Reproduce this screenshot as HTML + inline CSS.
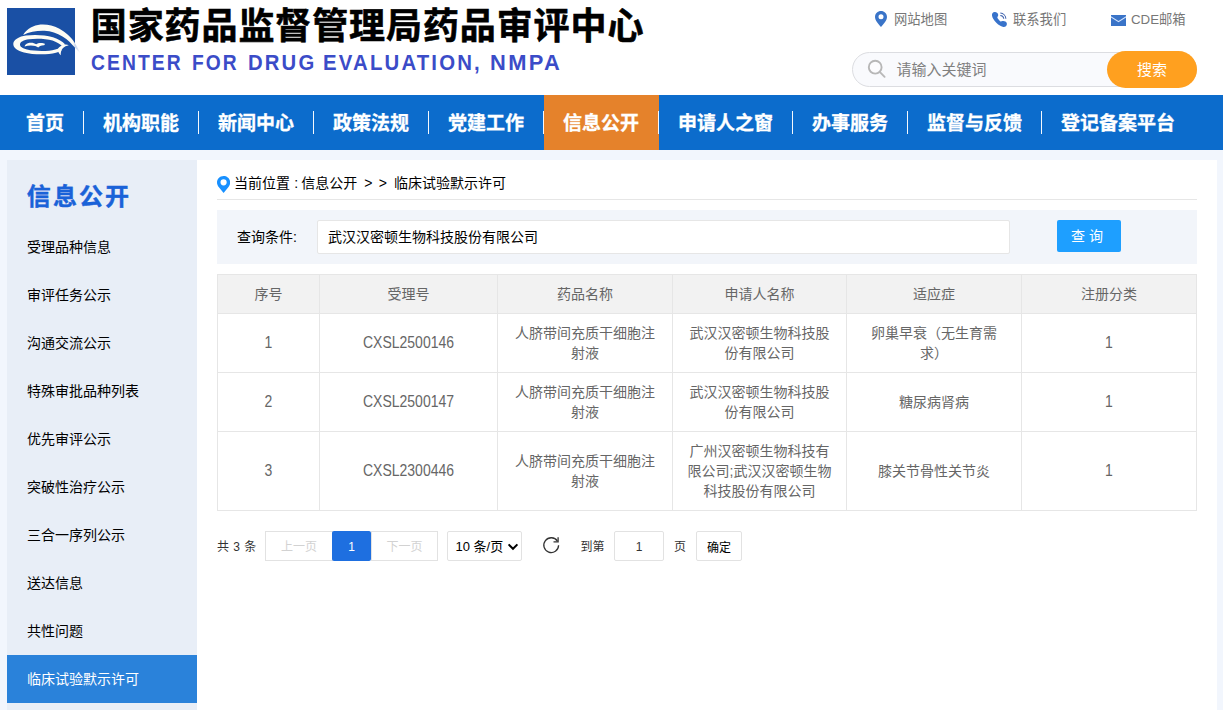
<!DOCTYPE html>
<html lang="zh-CN">
<head>
<meta charset="utf-8">
<title>国家药品监督管理局药品审评中心</title>
<style>
*{box-sizing:border-box;margin:0;padding:0}
html,body{width:1223px;height:710px;overflow:hidden}
body{background:#f2f6fd;font-family:"Liberation Sans","Noto Sans CJK SC",sans-serif;font-size:14px;color:#000;position:relative}
a{text-decoration:none;color:inherit}
ul{list-style:none}
.abs{position:absolute}
/* header */
#header{position:absolute;left:0;top:0;width:1223px;height:95px;background:#fff}
#logo{position:absolute;left:7px;top:8px;width:68px;height:67px;background:#1a50a5}
#title-cn{position:absolute;left:90.800px;top:2.200px;height:50px;line-height:50px;font-size:36px;font-weight:700;color:#000;white-space:nowrap;letter-spacing:0.900px;-webkit-text-stroke:0.600px #000}
#title-en{position:absolute;left:0;top:48.300px;height:30px;width:600px}
#title-en span{position:absolute;top:0;height:30px;line-height:30px;font-size:21.500px;font-weight:700;color:#3b4cc8;white-space:nowrap;letter-spacing:2.300px;transform-origin:0 50%}
.toplink{position:absolute;top:9.500px;height:20px;line-height:20px;font-size:13.300px;color:#777;white-space:nowrap}
.toplink svg{position:absolute;left:0;top:0}
#search{position:absolute;left:852px;top:52px;width:345px;height:35px;border:1px solid #dcdde1;border-radius:18px;background:#f9fafd}
#search .ph{position:absolute;left:43.500px;top:0;height:33px;line-height:33px;font-size:15px;color:#808080}
#search .btn{position:absolute;left:254px;top:-2px;width:90px;height:37px;border-radius:18.500px;background:#ffa01f;color:#fff;font-size:15px;line-height:37px;text-align:center}
/* nav */
#nav{position:absolute;left:0;top:95px;width:1223px;height:55px;background:#0c6ccc}
#nav ul{position:absolute;left:7px;top:0;height:55px;display:flex}
#nav li{position:relative;height:55px;line-height:57px;-webkit-text-stroke:0.300px #fff;padding:0 1px 0 0;text-align:center;width:115px;flex:none;font-size:19px;font-weight:700;color:#fff;white-space:nowrap}
#nav li:after{content:"";position:absolute;right:0;top:16px;width:1px;height:23px;background:#f4f8fd}
#nav li:last-child:after{display:none}
#nav li.on{background:#e5822b}
/* sidebar */
#side{position:absolute;left:7px;top:160px;width:190px;height:550px;background:#e8eef7}
#side h2{position:absolute;left:19.800px;top:18.400px;height:38px;line-height:38px;font-size:24px;font-weight:700;color:#1a62d8;white-space:nowrap;letter-spacing:2.100px;-webkit-text-stroke:0.400px #1a62d8}
#side li{position:absolute;left:0;width:190px;height:48px;line-height:48px;padding-left:20px;font-size:14px;color:#000;white-space:nowrap}
#side li.on{background:#2a82da;color:#fff}
/* main */
#main{position:absolute;left:197px;top:160px;width:1020px;height:550px;background:#fff}

#crumb{position:absolute;left:20px;top:13px;width:980px;height:27px;border-bottom:1px solid #e6e6e6;line-height:20px;font-size:14px;color:#000;white-space:nowrap}
#crumb span{position:absolute;top:0.400px}
#crumb span.c{width:20px;text-align:center}
#crumb svg{position:absolute;left:-0.100px;top:2.900px}
#query{position:absolute;left:20px;top:50px;width:980px;height:54px;background:#f2f5fa}
#query .lbl{position:absolute;left:20px;top:10px;height:34px;line-height:34px;font-size:14px;color:#000}
#query .inp{position:absolute;left:100px;top:10px;width:693px;height:34px;border:1px solid #e6e6e6;border-radius:2px;background:#fff;line-height:32px;padding-left:10px;font-size:14px;color:#000;white-space:nowrap}
#query .qbtn{position:absolute;left:840px;top:10px;width:64px;height:32px;background:#1e9fff;border-radius:2px;color:#fff;font-size:14px;line-height:32px;text-align:center;letter-spacing:4px;padding-left:0}
table{position:absolute;left:20px;top:114px;width:979px;border-collapse:collapse;table-layout:fixed;font-size:14px;color:#666}
th,td{border:1px solid #e6e6e6;text-align:center;vertical-align:middle;font-weight:400;line-height:20px;padding:0;white-space:nowrap}
th{height:39px;background:#f2f2f2}
td{height:59px}
tr.r3 td{height:79px}
.lt{display:inline-block;transform:translateY(-0.500px) scaleY(1.160)}
#pager{position:absolute;left:20px;top:371px;height:30px;width:700px;font-size:12px;color:#333;line-height:32px;white-space:nowrap}
#pager>*{position:absolute;top:0;height:30px}
#pager .sel{border-radius:2px}
#pager .bx{border:1px solid #e2e2e2;background:#fff;text-align:center;line-height:30px}
#pager .dis{color:#d2d2d2}
#pager .cur{background:#1e6fe0;color:#fff;text-align:center;border-radius:2px}
</style>
</head>
<body>
<div id="header">
  <div id="logo"><svg width="80" height="67" viewBox="0 0 80 67" style="position:absolute;left:0;top:0;overflow:visible">
<defs><linearGradient id="tl" x1="66" y1="0" x2="74" y2="0" gradientUnits="userSpaceOnUse"><stop offset="0" stop-color="#fdfcf4"/><stop offset="0.28" stop-color="#c9d6ec"/><stop offset="1" stop-color="#ffffff"/></linearGradient></defs>
<path d="M16.2 26.900C18.500 22.400 24 18.200 31 16.900C38 15.700 45.500 17.200 52 20.500C58.500 24 64.500 29.500 68.200 35.500C70.200 38.800 71.800 42 73.200 45C71.300 43.200 69.500 41.500 67.800 39.600C64.500 35.800 61 32 55.500 28.600C50 25.300 44 23.200 37.500 22.800C30 22.500 22.500 24 16.200 26.900Z" fill="url(#tl)"/>
<path fill-rule="evenodd" d="M6.300 35.600C6.800 31.500 12 28.500 19 27.500C27 26.400 38 26.800 46 29.200C51.500 30.900 55.500 33.500 58 36.200L55.500 38.500C52.500 36 49.500 34 45.500 32.600C39 30.600 29 30.200 22 31.200C16.500 32 13.200 33.800 13 36.300C12.800 38.600 15.500 40.500 20 41.600C26 43 35 43.400 42 42.700C46.500 42.200 50.500 41.200 53 39.800L54.500 42.500C51.500 44.400 47 45.600 42 46C34 46.700 24 46.300 17 44.500C10.500 42.800 5.900 39.800 6.300 35.600Z" fill="#fdfcf4"/>
<path d="M50.800 41.200C52 38.800 54.500 37.200 57.500 36.600C59 36.300 60.500 36.600 61.800 37.200C59.500 37.600 57.300 38.600 55.800 40.200C54.200 42 53.500 44.500 53.800 47.200C52 45.800 50.800 43.500 50.800 41.200Z" fill="#fdfcf4"/>
<path d="M17.500 38.400C18.200 36.500 20 35.200 22.500 34.800C25 34.400 27.500 35 29.200 36.300C30.200 35.400 32 35 34 35C35.500 35 37 35.200 37.800 35.800C38 36.400 37.800 37 37 37.200C35.500 37.200 34.200 37.500 33.200 38C32.300 38.500 31.800 39.200 31.200 39.500C30.400 39 29.500 38.400 28.200 38C25.500 37.200 21 37.300 17.500 38.400Z" fill="#fdfcf4"/>
</svg></div>
  <div id="title-cn">国家药品监督管理局药品审评中心</div>
  <div id="title-en"><span style="left:91.30px;transform:scaleX(0.898)">CENTER </span><span style="left:192.01px;transform:scaleX(0.893)">FOR </span><span style="left:247.56px;transform:scaleX(0.943)">DRUG </span><span style="left:323.25px;transform:scaleX(0.947)">EVALUATION, </span><span style="left:490.18px;transform:scaleX(1.018)">NMPA</span></div>
  <div class="toplink" style="left:875px"><svg width="12" height="16" viewBox="0 0 12 16" style="top:1.100px"><path fill-rule="evenodd" d="M6 0C2.700 0 0 2.600 0 5.900C0 9.500 3.600 12.800 6 16C8.400 12.800 12 9.500 12 5.900C12 2.600 9.300 0 6 0ZM6 3.300A2.500 2.500 0 1 1 6 8.300A2.500 2.500 0 1 1 6 3.300Z" fill="#3a74c8"/></svg><span style="margin-left:19px">网站地图</span></div>
  <div class="toplink" style="left:992px"><svg width="16" height="16" viewBox="0 0 16 16" style="top:2.500px"><path d="M2.600 0C3.900 -0.100 5 0.400 5.600 1.300C6.200 2.200 6.400 3.200 6 4.100C5.700 4.700 5.300 5.100 5.300 5.600C5.500 6.300 6.200 7.300 7 8.100C7.700 8.800 8.100 9.300 8.600 9.500C9.200 9.600 9.800 9.200 10.500 9C11.500 8.700 12.600 9 13.400 9.600C14.300 10.200 14.900 11 14.900 11.900C14.900 12.800 14.500 13.600 13.900 14.200C13.200 14.800 12.400 15 11.500 14.900C10.400 14.800 9.300 14.400 8.300 13.800C6.800 13 5.400 12 4.300 10.800C3 9.600 1.900 8.200 1.200 6.800C0.600 5.700 0.100 4.600 0 3.400C-0.100 2.500 0.100 1.600 0.600 0.900C1.100 0.300 1.800 0 2.600 0Z" fill="#3873cb"/><path d="M8.300 3.400C10.100 3.500 11.600 4.900 11.800 6.700" fill="none" stroke="#3f62ad" stroke-width="1.050"/><path d="M8.300 1.100C11.300 1.300 13.700 3.700 13.900 6.700" fill="none" stroke="#3f62ad" stroke-width="1.050"/></svg><span style="margin-left:21px">联系我们</span></div>
  <div class="toplink" style="left:1111px"><svg width="15" height="11" viewBox="0 0 15 11" style="top:5.400px"><rect width="15" height="11" fill="#3a74c8"/><path d="M0 1.200L7.500 5.900L15 1.200V2.600L7.500 7.300L0 2.600Z" fill="#d6e6ff"/></svg><span style="margin-left:20px">CDE邮箱</span></div>
  <div id="search"><svg width="20" height="20" viewBox="0 0 20 20" style="position:absolute;left:14.100px;top:6.300px"><circle cx="8.200" cy="8.200" r="6.400" fill="#fcfcfe" stroke="#b7b7b7" stroke-width="1.900"/><path d="M13.200 13.300L17.600 17.800" stroke="#b9b9b9" stroke-width="1.900" stroke-linecap="round"/></svg><span class="ph">请输入关键词</span><span class="btn">搜索</span></div>
</div>
<div id="nav">
  <ul>
    <li style="width:77px">首页</li><li>机构职能</li><li>新闻中心</li><li>政策法规</li><li>党建工作</li><li class="on">信息公开</li><li style="width:134px">申请人之窗</li><li>办事服务</li><li style="width:134px">监督与反馈</li><li style="width:153px">登记备案平台</li>
  </ul>
</div>
<div id="side">
  <h2>信息公开</h2>
  <ul>
    <li style="top:63px">受理品种信息</li>
    <li style="top:111px">审评任务公示</li>
    <li style="top:159px">沟通交流公示</li>
    <li style="top:207px">特殊审批品种列表</li>
    <li style="top:255px">优先审评公示</li>
    <li style="top:303px">突破性治疗公示</li>
    <li style="top:351px">三合一序列公示</li>
    <li style="top:399px">送达信息</li>
    <li style="top:447px">共性问题</li>
    <li class="on" style="top:495px">临床试验默示许可</li>
  </ul>
</div>
<div id="main">
  <div id="crumb"><svg width="13.200" height="17" viewBox="0 0 13.200 17"><path fill-rule="evenodd" d="M6.600 0C2.900 0 0 2.900 0 6.500C0 8.200 0.700 9.600 1.700 10.900L6.600 17L11.500 10.900C12.500 9.600 13.200 8.200 13.200 6.500C13.200 2.900 10.300 0 6.600 0ZM6.600 3.200A3.100 3.100 0 1 1 6.600 9.400A3.100 3.100 0 1 1 6.600 3.200Z" fill="#1890ff"/></svg><span style="left:17px">当前位置</span><span class="c" style="left:69.200px">:</span><span style="left:84.200px">信息公开</span><span class="c" style="left:141.400px">&gt;</span><span class="c" style="left:155.900px">&gt;</span><span style="left:177px">临床试验默示许可</span></div>
  <div id="query"><span class="lbl">查询条件:</span><div class="inp">武汉汉密顿生物科技股份有限公司</div><div class="qbtn">查询</div></div>
  <table>
    <colgroup><col style="width:102px"><col style="width:178px"><col style="width:175px"><col style="width:174px"><col style="width:175px"><col style="width:175px"></colgroup>
    <tr><th>序号</th><th>受理号</th><th>药品名称</th><th>申请人名称</th><th>适应症</th><th>注册分类</th></tr>
    <tr><td><span class="lt">1</span></td><td><span class="lt">CXSL2500146</span></td><td>人脐带间充质干细胞注<br>射液</td><td>武汉汉密顿生物科技股<br>份有限公司</td><td>卵巢早衰（无生育需<br>求）</td><td><span class="lt">1</span></td></tr>
    <tr><td><span class="lt">2</span></td><td><span class="lt">CXSL2500147</span></td><td>人脐带间充质干细胞注<br>射液</td><td>武汉汉密顿生物科技股<br>份有限公司</td><td>糖尿病肾病</td><td><span class="lt">1</span></td></tr>
    <tr class="r3"><td><span class="lt">3</span></td><td><span class="lt">CXSL2300446</span></td><td>人脐带间充质干细胞注<br>射液</td><td>广州汉密顿生物科技有<br>限公司;武汉汉密顿生物<br>科技股份有限公司</td><td>膝关节骨性关节炎</td><td><span class="lt">1</span></td></tr>
  </table>
  <div id="pager">
    <span style="left:0;word-spacing:1px">共 3 条</span>
    <span class="bx dis" style="left:48px;width:68px">上一页</span>
    <span class="bx dis" style="left:154px;width:67px">下一页</span>
    <span class="cur" style="left:115px;width:39px">1</span>
    <span class="bx sel" style="left:230px;width:75px"><span style="position:absolute;left:7.500px;top:0;line-height:29.500px;font-size:13px;color:#000">10 条/页</span><svg width="12" height="8" viewBox="0 0 12 8" style="position:absolute;left:59px;top:10.800px"><path d="M1.600 1.400L6 5.800L10.400 1.400" fill="none" stroke="#000" stroke-width="2"/></svg></span>
    <span class="rf" style="left:325px;width:20px"><svg width="20" height="20" viewBox="0 0 20 20" style="position:absolute;left:0;top:5px"><path d="M15.400 5.100A7.400 7.400 0 1 0 16.600 9.300" fill="none" stroke="#333" stroke-width="1.300"/><path d="M16.100 1.200V5.800H11.500" fill="none" stroke="#333" stroke-width="1.300"/></svg></span>
    <span style="left:363.500px">到第</span>
    <span class="bx" style="left:397px;width:50px;border-radius:2px;color:#333">1</span>
    <span style="left:457px">页</span>
    <span class="bx" style="left:479px;width:46px;border-radius:2px;color:#000;line-height:32.500px">确定</span>
  </div>
</div>
</body>
</html>
